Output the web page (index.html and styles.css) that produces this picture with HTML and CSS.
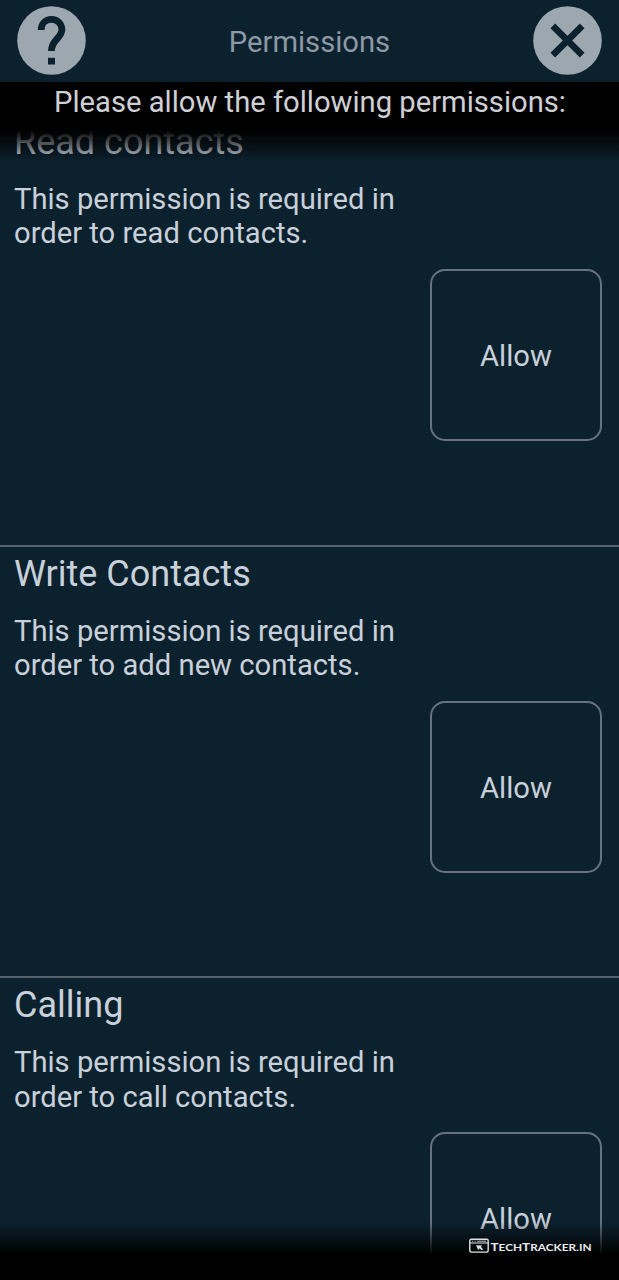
FILE: index.html
```html
<!DOCTYPE html>
<html lang="en">
<head>
<meta charset="utf-8">
<title>Permissions</title>
<link rel="stylesheet" href="styles.css">
</head>
<body>
<div class="screen">
  <header class="topbar">
    <button class="round" aria-label="Help">
      <svg viewBox="0 0 69 69" width="69" height="69"><circle cx="34.5" cy="34.5" r="34.3" fill="#9ca7b0"/><path d="M24.2 24C24.2 17.6 28.5 13.4 34.5 13.4S44.9 17.8 44.9 23.8C44.9 32.2 34.4 33.5 34.4 45" class="mark"/><rect x="31" y="51.8" width="7" height="6.7" fill="#0c212e"/></svg>
    </button>
    <h1 class="title">Permissions</h1>
    <button class="round" aria-label="Close">
      <svg viewBox="0 0 69 69" width="69" height="69"><circle cx="34.5" cy="34.5" r="34.3" fill="#9ca7b0"/><path d="M19.8 19.8L49.2 49.2M49.2 19.8L19.8 49.2" fill="none" stroke="#0c212e" stroke-width="6.6"/></svg>
    </button>
  </header>
  <main class="viewport">
    <section class="item">
      <h2 class="name">Read contacts</h2>
      <p class="desc">This permission is required in order to read contacts.</p>
      <button class="allow">Allow</button>
    </section>
    <section class="item">
      <h2 class="name">Write Contacts</h2>
      <p class="desc">This permission is required in order to add new contacts.</p>
      <button class="allow">Allow</button>
    </section>
    <section class="item">
      <h2 class="name">Calling</h2>
      <p class="desc">This permission is required in order to call contacts.</p>
      <button class="allow">Allow</button>
    </section>
    <div class="banner">Please allow the following permissions:</div>
    <div class="fade"></div>
    <div class="brand">
      <svg width="124" height="18" viewBox="0 0 124 18">
        <rect x="1.8" y="2.3" width="18.4" height="12.8" rx="1.5" fill="none" stroke="#dfe2e4" stroke-width="1.4"/>
        <path d="M2 6H20" stroke="#dfe2e4" stroke-width="1"/>
        <path d="M4 4.2H5.2M6.4 4.2H7.6M9 4.2H18" stroke="#b9bec2" stroke-width="1"/>
        <path d="M8 8.2L14.2 8.5L13 10.1L15 12.2L13.6 13.2L11.7 11.3L10.2 13Z" fill="#dfe2e4"/>
        <text x="22.5" y="14" textLength="101" lengthAdjust="spacingAndGlyphs" class="wordmark">T<tspan class="low">ECH</tspan>T<tspan class="low">RACKER.IN</tspan></text>
      </svg>
    </div>
  </main>
</div>
</body>
</html>
```
FILE: styles.css
```css
* { box-sizing: border-box; }
body {
  margin: 0;
  background: #0c212e;
  font-family: Roboto, "Noto Sans", sans-serif;
  color: #c8d0da;
}
h1, h2, p { margin: 0; font-weight: 400; }
button {
  padding: 0;
  border: 0;
  background: none;
  color: inherit;
  font: inherit;
}
.screen {
  display: flex;
  flex-direction: column;
  height: 1280px;
  overflow: hidden;
}
.topbar {
  display: flex;
  align-items: center;
  justify-content: space-between;
  flex: none;
  height: 82px;
  padding: 0 17px 1px;
}
.round, .round svg { display: block; }
.mark { fill: none; stroke: #0c212e; stroke-width: 6.8; }
.title {
  padding: 2px 0 0;
  font-size: 29.2px;
  color: #8c99a4;
}
.viewport {
  position: relative;
  flex: 1;
  overflow: hidden;
  padding-top: 33px;
}
.item {
  display: flex;
  flex-direction: column;
  height: 431.7px;
  padding: 4px 17px 0 14px;
  border-bottom: 2px solid #59626e;
}
.name {
  font-size: 36px;
  line-height: 46px;
}
.desc {
  width: 400px;
  margin-top: 17px;
  font-size: 29.2px;
  line-height: 34.4px;
}
.allow {
  align-self: flex-end;
  width: 172px;
  height: 172px;
  margin-top: 18.2px;
  padding-top: 2px;
  border: 2px solid #66737f;
  border-radius: 15px;
  font-size: 29.2px;
}
.banner {
  position: absolute;
  inset: 0 0 auto;
  height: 82px;
  padding: 3px 0 0 1px;
  background: linear-gradient(#000 0 48px, #0000 80px);
  font-size: 29.2px;
  line-height: 34px;
  text-align: center;
  color: #cfd0d5;
}
.fade {
  position: absolute;
  inset: auto 0 0;
  height: 58px;
  background: linear-gradient(#0000, #000 33px);
}
.brand {
  position: absolute;
  right: 27px;
  bottom: 25px;
  height: 18px;
}
.brand svg { display: block; }
.wordmark {
  font-family: Lato, sans-serif;
  font-size: 11.6px;
  font-weight: 700;
  fill: #e8eaec;
}
.low { font-size: 10.2px; }
```
